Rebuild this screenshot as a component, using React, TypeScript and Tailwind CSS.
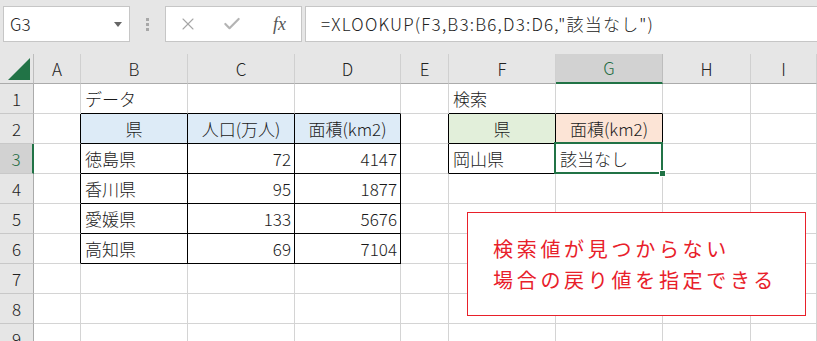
import { Check, X } from 'lucide-react';

const FONT = '"Noto Sans CJK JP", "Noto Sans", sans-serif';

const COLS = ['A', 'B', 'C', 'D', 'E', 'F', 'G', 'H', 'I'];
const ROWS = [1, 2, 3, 4, 5, 6, 7, 8, 9];

type Cell = { text: string; align?: 'left' | 'right' | 'center'; fill?: string };

// sheet contents keyed by "col+row"
const CELLS: Record<string, Cell> = {
  B1: { text: 'データ' },
  B2: { text: '県', align: 'center', fill: 'blue' },
  C2: { text: '人口(万人)', align: 'center', fill: 'blue' },
  D2: { text: '面積(km2)', align: 'center', fill: 'blue' },
  B3: { text: '徳島県' },
  C3: { text: '72', align: 'right' },
  D3: { text: '4147', align: 'right' },
  B4: { text: '香川県' },
  C4: { text: '95', align: 'right' },
  D4: { text: '1877', align: 'right' },
  B5: { text: '愛媛県' },
  C5: { text: '133', align: 'right' },
  D5: { text: '5676', align: 'right' },
  B6: { text: '高知県' },
  C6: { text: '69', align: 'right' },
  D6: { text: '7104', align: 'right' },
  F1: { text: '検索' },
  F2: { text: '県', align: 'center', fill: 'green' },
  G2: { text: '面積(km2)', align: 'center', fill: 'orange' },
  F3: { text: '岡山県' },
  G3: { text: '該当なし' },
};

// cells that carry thin black table borders
function inTable(c: number, r: number) {
  if (c >= 1 && c <= 3 && r >= 2 && r <= 6) return true;
  if (c >= 5 && c <= 6 && r >= 2 && r <= 3) return true;
  return false;
}

function SheetCell({ c, r }: { c: number; r: number }) {
  const key = `${COLS[c]}${r}`;
  const cell = CELLS[key];
  const blackRight = inTable(c, r) || inTable(c + 1, r);
  const blackBottom = inTable(c, r) || inTable(c, r + 1);
  const selected = key === 'G3';

  return (
    <div
      className={[
        'relative flex h-[30px] items-center overflow-visible border-r border-b px-[4px] text-[17px] font-light leading-none text-[#1a1a1a]',
        blackRight ? 'border-r-black' : 'border-r-[#d4d4d4]',
        blackBottom ? 'border-b-black' : 'border-b-[#d4d4d4]',
        cell?.fill === 'blue' ? 'bg-[#ddebf7]' : '',
        cell?.fill === 'green' ? 'bg-[#e2efda]' : '',
        cell?.fill === 'orange' ? 'bg-[#fce4d6]' : '',
        cell?.align === 'right' ? 'justify-end pr-[3px]' : '',
        cell?.align === 'center' ? 'justify-center' : '',
      ].join(' ')}
    >
      {cell && <span className="whitespace-nowrap">{cell.text}</span>}
      {selected && (
        <>
          <div className="pointer-events-none absolute -top-[2px] -left-[2px] -right-[1px] -bottom-[1px] z-10 border-2 border-[#217346]" />
          <div className="absolute -right-[4px] -bottom-[4px] z-10 h-[7px] w-[7px] border border-white bg-[#217346]" />
        </>
      )}
    </div>
  );
}

export default function App() {
  return (
    <div
      className="relative h-[341px] w-[817px] overflow-hidden bg-white"
      style={{ fontFamily: FONT }}
    >
      {/* name box + formula bar */}
      <div className="flex h-[42px] items-start bg-[#e6e6e6] pt-[6px]">
        <div className="ml-[3px] flex h-[36px] w-[127px] items-center justify-between border border-[#c6c6c6] bg-white pl-[6px] pr-[7px]">
          <span className="text-[17px] font-light text-[#222]">G3</span>
          <svg width="8" height="5" viewBox="0 0 8 5">
            <polygon points="0,0 8,0 4,5" fill="#666" />
          </svg>
        </div>
        <div className="ml-[16px] mr-[16px] flex h-[36px] flex-col items-center justify-center gap-[2px]">
          <span className="h-[3px] w-[3px] bg-[#a8a8a8]" />
          <span className="h-[3px] w-[3px] bg-[#a8a8a8]" />
          <span className="h-[3px] w-[3px] bg-[#a8a8a8]" />
        </div>
        <div className="flex h-[36px] w-[137px] items-center border border-[#c6c6c6] bg-white">
          <X className="ml-[12px] h-[20px] w-[20px] text-[#a6a6a6]" strokeWidth={1.3} />
          <Check className="ml-[24px] h-[20px] w-[20px] text-[#b4b4b4]" strokeWidth={2.6} />
          <span
            className="ml-[31px] text-[18px] italic text-[#555]"
            style={{ fontFamily: '"Liberation Serif", serif' }}
          >
            fx
          </span>
        </div>
        <div className="ml-[3px] flex h-[36px] flex-1 items-center border border-r-0 border-[#c6c6c6] bg-white pl-[15px] text-[17px] font-light tracking-[1.2px] text-[#222]">
          =XLOOKUP(F3,B3:B6,D3:D6,"該当なし")
        </div>
      </div>

      <div className="h-[12px] bg-[#e6e6e6]" />

      {/* sheet grid */}
      <div className="grid grid-cols-[34px_47px_107px_107px_106px_48px_107px_107px_88px_1fr]">
        <div className="flex h-[30px] items-end justify-end border-r border-b border-r-[#bdbdbd] border-b-[#ababab] bg-[#e6e6e6] pr-[3px] pb-[3px]">
          <svg width="22" height="22" viewBox="0 0 22 22">
            <polygon points="22,0 22,22 0,22" fill="#217346" />
          </svg>
        </div>
        {COLS.map((col) => (
          <div
            key={col}
            className={
              col === 'G'
                ? 'flex h-[30px] items-center justify-center border-r border-b-2 border-r-[#bdbdbd] border-b-[#217346] bg-[#d2d2d2] text-[17px] font-light text-[#1e6b41]'
                : 'flex h-[30px] items-center justify-center border-r border-b border-r-[#d0d0d0] border-b-[#ababab] bg-[#e6e6e6] text-[17px] font-light text-[#222]'
            }
          >
            {col}
          </div>
        ))}

        {ROWS.map((r) => (
          <div key={r} className="contents">
            <div
              className={
                r === 3
                  ? 'flex h-[30px] items-center justify-center border-r-2 border-b border-r-[#217346] border-b-[#c8c8c8] bg-[#d2d2d2] text-[17px] font-light text-[#1e6b41]'
                  : 'flex h-[30px] items-center justify-center border-r border-b border-r-[#ababab] border-b-[#c8c8c8] bg-[#e6e6e6] text-[17px] font-light text-[#222]'
              }
            >
              {r}
            </div>
            {COLS.map((_, c) => (
              <SheetCell key={c} c={c} r={r} />
            ))}
          </div>
        ))}
      </div>

      {/* callout shape over the sheet */}
      <div className="absolute top-[212px] left-[467px] flex h-[104px] w-[339px] flex-col justify-center border border-[#e8202a] bg-white pl-[25px] text-[20px] font-normal leading-[31px] tracking-[3.7px] text-[#e8202a]">
        <span>検索値が見つからない</span>
        <span>場合の戻り値を指定できる</span>
      </div>
    </div>
  );
}
